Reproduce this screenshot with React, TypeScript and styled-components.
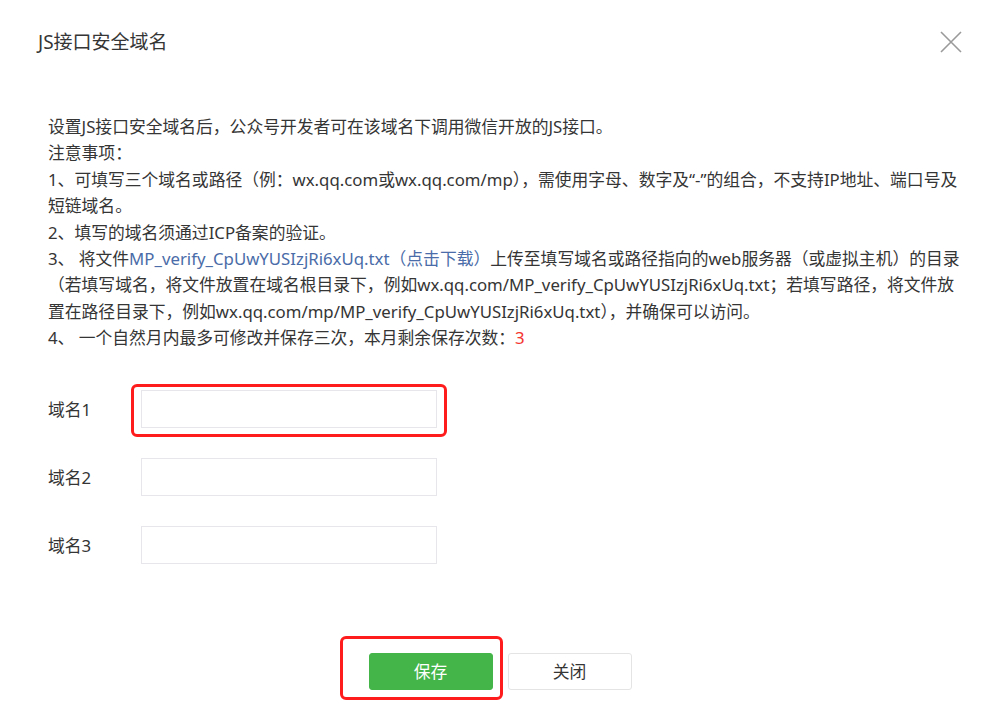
import React from "react";
import styled, { createGlobalStyle } from "styled-components";

const GlobalStyle = createGlobalStyle`
  html, body {
    margin: 0;
    padding: 0;
    background: #ffffff;
  }
  body {
    font-family: "Noto Sans", "Noto Sans CJK SC", sans-serif;
    color: #353535;
  }
  * { box-sizing: border-box; }
`;

const Dialog = styled.div`
  width: 1000px;
  height: 727px;
  background: #ffffff;
  display: flex;
  flex-direction: column;
  overflow: hidden;
`;

const Header = styled.div`
  height: 84px;
  padding: 0 38px;
  display: flex;
  align-items: center;
  justify-content: space-between;
`;

const Title = styled.h3`
  margin: 0;
  font-size: 19px;
  font-weight: 400;
  color: #353535;
  line-height: 26px;
`;

const CloseButton = styled.button`
  width: 22px;
  height: 22px;
  padding: 0;
  border: none;
  background: transparent;
  display: flex;
  align-items: center;
  justify-content: center;
  cursor: pointer;
`;

const Body = styled.div`
  padding: 30px 48px 0;
  display: flex;
  flex-direction: column;
`;

const Notes = styled.div`
  font-size: 16.8px;
  line-height: 26.4px;
  color: #353535;
`;

const NoteLine = styled.div`
  white-space: nowrap;
`;

const Link = styled.a`
  color: #4a6ca8;
  text-decoration: none;
`;

const Count = styled.span`
  color: #f43530;
`;

const Form = styled.div`
  margin-top: 38px;
  display: flex;
  flex-direction: column;
  gap: 30px;
`;

const Row = styled.div`
  display: flex;
  align-items: center;
  height: 38px;
`;

const Label = styled.label`
  width: 93px;
  font-size: 16.8px;
  color: #353535;
`;

const FieldWrap = styled.div`
  position: relative;
  width: 296px;
  height: 38px;
`;

const Input = styled.input`
  width: 100%;
  height: 100%;
  border: 1px solid #e7e7eb;
  border-radius: 0;
  padding: 0 10px;
  font-size: 16px;
  outline: none;
  background: #fff;
`;

const Marker = styled.div<{ $top: number; $right: number; $bottom: number; $left: number }>`
  position: absolute;
  top: ${(p) => p.$top}px;
  right: ${(p) => p.$right}px;
  bottom: ${(p) => p.$bottom}px;
  left: ${(p) => p.$left}px;
  border: 3px solid #ff1c1c;
  border-radius: 6px;
  pointer-events: none;
`;

const Footer = styled.div`
  margin-top: 89px;
  display: flex;
  justify-content: center;
  gap: 15px;
`;

const ButtonWrap = styled.div`
  position: relative;
`;

const Button = styled.button<{ $primary?: boolean }>`
  width: 124px;
  height: 37px;
  border-radius: 3px;
  font-family: inherit;
  font-size: 16.8px;
  cursor: pointer;
  display: flex;
  align-items: center;
  justify-content: center;
  border: 1px solid ${(p) => (p.$primary ? "#44b549" : "#e4e4e4")};
  background: ${(p) => (p.$primary ? "#44b549" : "#ffffff")};
  color: ${(p) => (p.$primary ? "#ffffff" : "#353535")};
`;

const CloseIcon = () => (
  <svg width="22" height="22" viewBox="0 0 22 22">
    <path d="M1 1 L21 21 M21 1 L1 21" stroke="#9a9a9a" strokeWidth="1.6" fill="none" />
  </svg>
);

const fileName = "MP_verify_CpUwYUSIzjRi6xUq.txt";

export default function App() {
  return (
    <>
      <GlobalStyle />
      <Dialog>
        <Header>
          <Title>JS接口安全域名</Title>
          <CloseButton aria-label="关闭">
            <CloseIcon />
          </CloseButton>
        </Header>
        <Body>
          <Notes>
            <NoteLine>设置JS接口安全域名后，公众号开发者可在该域名下调用微信开放的JS接口。</NoteLine>
            <NoteLine>注意事项：</NoteLine>
            <NoteLine>
              1、可填写三个域名或路径（例：wx.qq.com或wx.qq.com/mp），需使用字母、数字及“-”的组合，不支持IP地址、端口号及
            </NoteLine>
            <NoteLine>短链域名。</NoteLine>
            <NoteLine>2、填写的域名须通过ICP备案的验证。</NoteLine>
            <NoteLine>
              3、 将文件<Link href="#">{fileName}（点击下载）</Link>上传至填写域名或路径指向的web服务器（或虚拟主机）的目录
            </NoteLine>
            <NoteLine>
              （若填写域名，将文件放置在域名根目录下，例如wx.qq.com/{fileName}；若填写路径，将文件放
            </NoteLine>
            <NoteLine>置在路径目录下，例如wx.qq.com/mp/{fileName}），并确保可以访问。</NoteLine>
            <NoteLine>
              4、 一个自然月内最多可修改并保存三次，本月剩余保存次数：<Count>3</Count>
            </NoteLine>
          </Notes>
          <Form>
            <Row>
              <Label>域名1</Label>
              <FieldWrap>
                <Input />
                <Marker $top={-6} $right={-10} $bottom={-9} $left={-10} />
              </FieldWrap>
            </Row>
            <Row>
              <Label>域名2</Label>
              <FieldWrap>
                <Input />
              </FieldWrap>
            </Row>
            <Row>
              <Label>域名3</Label>
              <FieldWrap>
                <Input />
              </FieldWrap>
            </Row>
          </Form>
        </Body>
        <Footer>
          <ButtonWrap>
            <Button $primary>保存</Button>
            <Marker $top={-17} $right={-10} $bottom={-10} $left={-29} />
          </ButtonWrap>
          <ButtonWrap>
            <Button>关闭</Button>
          </ButtonWrap>
        </Footer>
      </Dialog>
    </>
  );
}
